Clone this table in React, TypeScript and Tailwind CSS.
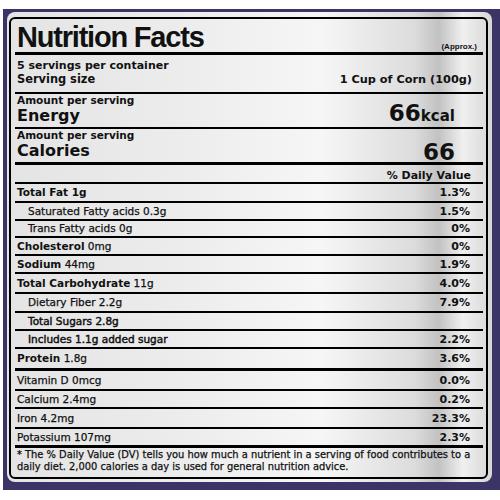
import React from "react";

interface NutrientRow {
  bold?: string;
  text?: string;
  sub?: boolean;
  heavy?: boolean;
  dv: string;
  h: string;
  thick?: boolean;
}

const rows: NutrientRow[] = [
  { bold: "Total Fat 1g", dv: "1.3%", h: "h-[19px]" },
  { text: "Saturated Fatty acids 0.3g", sub: true, dv: "1.5%", h: "h-[18px]" },
  { text: "Trans Fatty acids 0g", sub: true, dv: "0%", h: "h-[17px]" },
  { bold: "Cholesterol", text: " 0mg", dv: "0%", h: "h-[18px]" },
  { bold: "Sodium", text: " 44mg", dv: "1.9%", h: "h-[18px]" },
  { bold: "Total Carbohydrate", text: " 11g", dv: "4.0%", h: "h-[20px]" },
  { text: "Dietary Fiber 2.2g", sub: true, dv: "7.9%", h: "h-[19px]" },
  { text: "Total Sugars 2.8g", sub: true, heavy: true, dv: "", h: "h-[18px]" },
  { text: "Includes 1.1g added sugar", sub: true, heavy: true, dv: "2.2%", h: "h-[18px]" },
  { bold: "Protein", text: " 1.8g", dv: "3.6%", h: "h-[22px]", thick: true },
  { text: "Vitamin D 0mcg", dv: "0.0%", h: "h-[20px]" },
  { text: "Calcium 2.4mg", dv: "0.2%", h: "h-[18px]" },
  { text: "Iron 4.2mg", dv: "23.3%", h: "h-[20px]" },
  { text: "Potassium 107mg", dv: "2.3%", h: "h-[19px]", thick: true },
];

const Row: React.FC<{ row: NutrientRow }> = ({ row }) => (
  <div
    className={`flex items-center justify-between border-black ${row.h} ${
      row.thick ? "border-b-[3px]" : "border-b-2"
    } ${row.sub ? "pl-[13px]" : "pl-[2px]"} pr-[13px]`}
  >
    <span className="text-[10.5px] leading-none whitespace-nowrap">
      {row.bold && <span className="font-bold">{row.bold}</span>}
      {row.text && (
        <span
          className={
            row.heavy
              ? "[-webkit-text-stroke:0.45px_#111]"
              : "[-webkit-text-stroke:0.25px_#111]"
          }
        >
          {row.text}
        </span>
      )}
    </span>
    <span className="text-[11px] font-bold leading-none">{row.dv}</span>
  </div>
);

export default function App() {
  return (
    <div className="w-[500px] h-[500px] bg-white pt-[9px] pl-[3px] font-['DejaVu_Sans',sans-serif] text-[#111]">
      <div className="h-[481px] bg-[#3a3467] pt-[3px] pl-[4px] pr-[8px] pb-[8px]">
        <div className="h-full rounded-[8px] pt-[5px] pb-[3px] pl-[2px] pr-[4px] bg-[linear-gradient(90deg,#e4e4e4_0%,#ececec_35%,#f6f6f6_65%,#dcdcdc_84%,#c2c2c2_89%,#f0f0f0_94%,#d6d6d6_100%)]">
          <div className="h-full border-2 border-black rounded-[6px] pl-[4px] pr-[3px]">
            {/* Title */}
            <div className="h-[36px] border-b-[3px] border-black flex items-end justify-between pl-[2px] pr-[6px]">
              <span className="font-['Liberation_Sans',sans-serif] font-bold text-[29px] leading-none tracking-[-1.2px]">
                Nutrition Facts
              </span>
              <span className="font-['Liberation_Sans',sans-serif] font-bold text-[8px] leading-none pb-[1px]">
                (Approx.)
              </span>
            </div>

            {/* Serving */}
            <div className="h-[39px] border-b-2 border-black pl-[2px] pr-[11px] pt-[4px]">
              <div className="font-bold text-[11px] leading-[13px]">5 servings per container</div>
              <div className="flex items-baseline justify-between">
                <span className="font-bold text-[11.4px] leading-[14px]">Serving size</span>
                <span className="font-bold text-[11.3px] leading-[14px]">1 Cup of Corn (100g)</span>
              </div>
            </div>

            {/* Energy */}
            <div className="h-[35px] border-b-2 border-black flex items-end justify-between pl-[2px] pr-[28px] pb-[1px]">
              <div className="self-start">
                <div className="font-bold text-[10.5px] leading-[12.5px]">Amount per serving</div>
                <div className="font-bold text-[16px] leading-[18.6px]">Energy</div>
              </div>
              <div className="font-bold leading-[20px]">
                <span className="text-[23px]">66</span>
                <span className="text-[15px]">kcal</span>
              </div>
            </div>

            {/* Calories */}
            <div className="h-[36px] border-b-[3px] border-black flex items-end justify-between pl-[2px] pr-[28px]">
              <div className="self-start">
                <div className="font-bold text-[10.5px] leading-[12.5px]">Amount per serving</div>
                <div className="font-bold text-[16px] leading-[18.6px]">Calories</div>
              </div>
              <div className="font-bold text-[23px] leading-[20px]">66</div>
            </div>

            {/* Daily value header */}
            <div className="h-[19px] border-b-2 border-black flex items-end justify-end pr-[12px] pb-[1px]">
              <span className="font-bold text-[11px] leading-none">% Daily Value</span>
            </div>

            {rows.map((row, i) => (
              <Row key={i} row={row} />
            ))}

            {/* Footnote */}
            <div className="h-[29px] pl-[2px] pt-[1px] text-[9.9px] leading-[12px] whitespace-nowrap [-webkit-text-stroke:0.25px_#111]">
              * The % Daily Value (DV) tells you how much a nutrient in a serving of food contributes to a
              <br />
              daily diet. 2,000 calories a day is used for general nutrition advice.
            </div>
          </div>
        </div>
      </div>
    </div>
  );
}
